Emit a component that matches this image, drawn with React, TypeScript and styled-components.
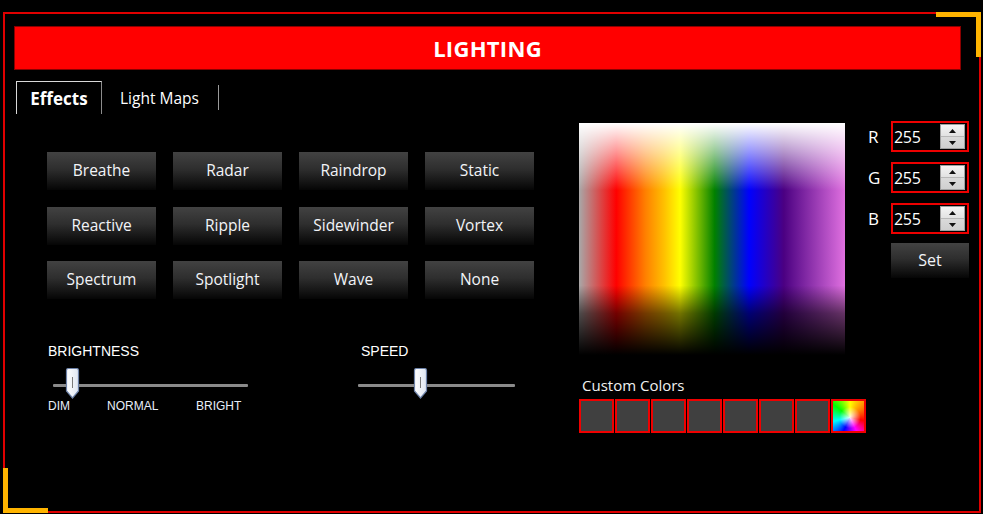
import React from "react";
import styled, { createGlobalStyle } from "styled-components";

const Global = createGlobalStyle`
  html, body { margin: 0; padding: 0; background: #000; }
  body { width: 983px; height: 514px; overflow: hidden; font-family: "Open Sans", "Noto Sans", sans-serif; }
  * { box-sizing: border-box; }
`;

const Frame = styled.div`
  position: relative;
  margin: 12px 2px 0 3px;
  height: 501px;
  border: 2px solid #e00000;
  padding: 12px 18px 0 9px;
  display: flex;
  flex-direction: column;
`;

const Corner = styled.div<{ $pos: "tr" | "bl" }>`
  position: absolute;
  width: 45px;
  height: 45px;
  border-color: #ffb400;
  border-style: solid;
  border-width: 0;
  ${(p) =>
    p.$pos === "tr"
      ? `top: -2px; right: -2px; border-top-width: 5px; border-right-width: 5px;`
      : `bottom: -2px; left: -2px; border-bottom-width: 5px; border-left-width: 5px;`}
`;

const TitleBar = styled.div`
  height: 44px;
  background: #ff0000;
  border: 1px solid #8a0000;
  display: flex;
  align-items: center;
  justify-content: center;
  color: #fff;
  font-family: "Open Sans", sans-serif;
  font-weight: 700;
  font-size: 22px;
  letter-spacing: 0.3px;
`;

const TabStrip = styled.div`
  margin-top: 11px;
  padding-left: 2px;
  height: 33px;
  display: flex;
  align-items: stretch;
`;

const Tab = styled.div<{ $active?: boolean }>`
  display: flex;
  align-items: center;
  justify-content: center;
  color: #fff;
  font-size: ${(p) => (p.$active ? "17px" : "15.5px")};
  font-weight: ${(p) => (p.$active ? 700 : 400)};
  ${(p) =>
    p.$active
      ? `width: 86px; border: 1px solid #d8d8d8; border-bottom: none; border-right-color: #8c8c8c; padding-top: 1px;`
      : `padding: 0 19px 0 18px; `}
`;

const TabSeparator = styled.div`
  width: 1px;
  margin: 4px 0 4px 0;
  background: #9a9a9a;
`;

const Content = styled.div`
  display: flex;
  align-items: flex-start;
  & > * { flex-shrink: 0; }
`;

const EffectsPanel = styled.div`
  width: 565px;
  padding: 38px 0 0 33px;
`;

const ButtonGrid = styled.div`
  display: grid;
  grid-template-columns: repeat(4, 109px);
  grid-auto-rows: 38px;
  column-gap: 17px;
  row-gap: 16.5px;
`;

const EffectButton = styled.div`
  display: flex;
  align-items: center;
  justify-content: center;
  padding-bottom: 2px;
  background: linear-gradient(#424242 0%, #2e2e2e 45%, #141414 80%, #050505 100%);
  color: #f2f4f8;
  font-size: 15.5px;
`;

const SliderRow = styled.div`
  margin-top: 44px;
  padding-left: 1px;
  display: flex;
  gap: 110px;
`;

const SliderBlock = styled.div<{ $w: number }>`
  width: ${(p) => p.$w}px;
  font-family: "Liberation Sans", Arial, sans-serif;
  color: #fff;
`;

const SliderLabel = styled.div<{ $indent?: number }>`
  font-size: 14px;
  line-height: 16px;
  padding-left: ${(p) => p.$indent ?? 0}px;
`;

const TrackArea = styled.div<{ $inset: number; $w: number }>`
  position: relative;
  margin-top: 9px;
  margin-left: ${(p) => p.$inset}px;
  width: ${(p) => p.$w}px;
  height: 31px;
  display: flex;
  align-items: center;
`;

const TrackLine = styled.div`
  width: 100%;
  height: 3px;
  margin-top: 3px;
  background: #8a8a8a;
  border-radius: 1px;
`;

const ThumbWrap = styled.div`
  position: absolute;
  top: 0;
  width: 15px;
  height: 31px;
`;

const TickLabels = styled.div`
  display: flex;
  font-size: 12px;
  line-height: 14px;
  color: #e8eef8;
`;

const Tick = styled.span<{ $w: number }>`
  width: ${(p) => p.$w}px;
`;

const ColorPanel = styled.div`
  width: 266px;
  padding-top: 9px;
`;

const Spectrum = styled.div`
  width: 266px;
  height: 232px;
  background:
    linear-gradient(to bottom, #ffffff 0%, rgba(255,255,255,0.6) 12%, rgba(255,255,255,0) 29%, rgba(0,0,0,0) 70%, rgba(0,0,0,0.55) 82%, #000 100%),
    linear-gradient(to right, #a8a8a8 0%, #ff0000 14%, #ff8000 25%, #ffc000 32%, #ffff00 38%, #008000 51%, #0000ff 64%, #4b0082 77%, #e070e0 100%);
`;

const CustomLabel = styled.div`
  margin-top: 20px;
  padding-left: 3px;
  font-size: 15px;
  line-height: 20px;
  color: #f0f0f0;
`;

const Swatches = styled.div`
  margin-top: 4px;
  display: flex;
  gap: 1px;
  width: 290px;
`;

const Swatch = styled.div<{ $wheel?: boolean }>`
  flex-shrink: 0;
  width: 35px;
  height: 34px;
  border: 2px solid #f00000;
  background: ${(p) =>
    p.$wheel
      ? `radial-gradient(circle at 55% 55%, rgba(255,255,255,0.9) 0%, rgba(255,255,255,0) 45%), conic-gradient(from 0deg at 55% 55%, #ffff00, #ff8000, #ff0000, #ff00ff, #0000ff, #00ffff, #00ff00, #ffff00)`
      : "#404040"};
`;

const RgbPanel = styled.div`
  margin-left: 23px;
  padding-top: 7px;
  display: flex;
  flex-direction: column;
  gap: 10px;
`;

const RgbRow = styled.div`
  display: flex;
  align-items: center;
`;

const RgbLabel = styled.div`
  width: 23px;
  font-size: 17px;
  color: #fff;
`;

const NumBox = styled.div`
  width: 78px;
  height: 31px;
  border: 2px solid #ee0000;
  display: flex;
  align-items: center;
  padding: 0 2px 0 1px;
  justify-content: space-between;
`;

const NumText = styled.span`
  color: #fff;
  font-size: 16px;
  letter-spacing: -0.3px;
`;

const Spin = styled.div`
  width: 25px;
  height: 25px;
  display: flex;
  flex-direction: column;
  border: 1px solid #a0a0a0;
  background: #e6e6e6;
`;

const SpinHalf = styled.div<{ $down?: boolean }>`
  flex: 1;
  display: flex;
  align-items: center;
  justify-content: center;
  background: ${(p) => (p.$down ? "linear-gradient(#dadada,#cfcfcf)" : "linear-gradient(#f4f4f4,#e2e2e2)")};
  ${(p) => (p.$down ? "border-top: 1px solid #b8b8b8;" : "")}
`;

const SetButton = styled(EffectButton)`
  margin-top: -1px;
  margin-left: 23px;
  width: 78px;
  height: 35px;
  font-size: 16px;
`;

const Thumb: React.FC<{ left: number }> = ({ left }) => (
  <ThumbWrap style={{ left }}>
    <svg width="15" height="31" viewBox="0 0 15 31">
      <defs>
        <linearGradient id="tg" x1="0" y1="0" x2="1" y2="0">
          <stop offset="0" stopColor="#ffffff" />
          <stop offset="1" stopColor="#dfe6f2" />
        </linearGradient>
      </defs>
      <path
        d="M1.5 2.5 Q1.5 0.5 3.5 0.5 H11.5 Q13.5 0.5 13.5 2.5 V23 L7.5 30 L1.5 23 Z"
        fill="url(#tg)"
        stroke="#6d82a8"
        strokeWidth="1.2"
      />
      <line x1="7.5" y1="9" x2="7.5" y2="20" stroke="#7a7a7a" strokeWidth="1" />
    </svg>
  </ThumbWrap>
);

const Arrow: React.FC<{ down?: boolean }> = ({ down }) => (
  <svg width="7" height="4" viewBox="0 0 7 4">
    <path d={down ? "M0 0 H7 L3.5 4 Z" : "M0 4 H7 L3.5 0 Z"} fill="#111" />
  </svg>
);

const effects = [
  "Breathe", "Radar", "Raindrop", "Static",
  "Reactive", "Ripple", "Sidewinder", "Vortex",
  "Spectrum", "Spotlight", "Wave", "None",
];

export default function App() {
  return (
    <>
      <Global />
      <Frame>
        <Corner $pos="tr" />
        <Corner $pos="bl" />
        <TitleBar>LIGHTING</TitleBar>
        <TabStrip>
          <Tab $active>Effects</Tab>
          <Tab>Light Maps</Tab>
          <TabSeparator />
        </TabStrip>
        <Content>
          <EffectsPanel>
            <ButtonGrid>
              {effects.map((e) => (
                <EffectButton key={e}>{e}</EffectButton>
              ))}
            </ButtonGrid>
            <SliderRow>
              <SliderBlock $w={200}>
                <SliderLabel>BRIGHTNESS</SliderLabel>
                <TrackArea $inset={5} $w={195}>
                  <TrackLine />
                  <Thumb left={12} />
                </TrackArea>
                <TickLabels>
                  <Tick $w={59}>DIM</Tick>
                  <Tick $w={89}>NORMAL</Tick>
                  <Tick $w={50}>BRIGHT</Tick>
                </TickLabels>
              </SliderBlock>
              <SliderBlock $w={157}>
                <SliderLabel $indent={3}>SPEED</SliderLabel>
                <TrackArea $inset={0} $w={157}>
                  <TrackLine />
                  <Thumb left={55} />
                </TrackArea>
              </SliderBlock>
            </SliderRow>
          </EffectsPanel>
          <ColorPanel>
            <Spectrum />
            <CustomLabel>Custom Colors</CustomLabel>
            <Swatches>
              {Array.from({ length: 7 }).map((_, i) => (
                <Swatch key={i} />
              ))}
              <Swatch $wheel />
            </Swatches>
          </ColorPanel>
          <RgbPanel>
            {["R", "G", "B"].map((c) => (
              <RgbRow key={c}>
                <RgbLabel>{c}</RgbLabel>
                <NumBox>
                  <NumText>255</NumText>
                  <Spin>
                    <SpinHalf>
                      <Arrow />
                    </SpinHalf>
                    <SpinHalf $down>
                      <Arrow down />
                    </SpinHalf>
                  </Spin>
                </NumBox>
              </RgbRow>
            ))}
            <SetButton>Set</SetButton>
          </RgbPanel>
        </Content>
      </Frame>
    </>
  );
}
